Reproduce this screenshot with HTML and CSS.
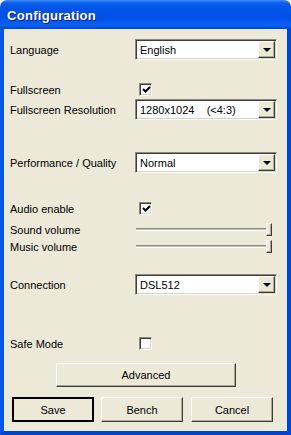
FILE: index.html
```html
<!DOCTYPE html>
<html lang="en">
<head>
    <meta charset="UTF-8">
    <meta name="viewport" content="width=device-width, initial-scale=1.0">
    <title>Configuration</title>
    <link rel="stylesheet" href="styles.css">
</head>
<body>
    <div class="window">
        <div class="titlebar">Configuration</div>

        <div class="client">
            <!-- Language -->
            <div class="row row-language">
                <span class="label">Language</span>
                <div class="combo"><span class="value">English</span><span class="arrow"></span></div>
            </div>

            <!-- Fullscreen -->
            <div class="row row-fullscreen">
                <span class="label">Fullscreen</span>
                <span class="check checked">
                    <svg width="9" height="9" viewBox="0 0 9 9"><path d="M1 4 L3.5 6.5 L8 2" fill="none" stroke="#000" stroke-width="2"/></svg>
                </span>
            </div>
            <div class="row row-resolution">
                <span class="label">Fullscreen Resolution</span>
                <div class="combo"><span class="value">1280x1024&nbsp;&nbsp;&nbsp;&nbsp;(&lt;4:3)</span><span class="arrow"></span></div>
            </div>

            <!-- Performance -->
            <div class="row row-quality">
                <span class="label">Performance / Quality</span>
                <div class="combo"><span class="value">Normal</span><span class="arrow"></span></div>
            </div>

            <!-- Audio -->
            <div class="row row-audio">
                <span class="label">Audio enable</span>
                <span class="check checked">
                    <svg width="9" height="9" viewBox="0 0 9 9"><path d="M1 4 L3.5 6.5 L8 2" fill="none" stroke="#000" stroke-width="2"/></svg>
                </span>
            </div>
            <div class="row row-slider">
                <span class="label">Sound volume</span>
                <div class="slider"><span class="thumb"></span></div>
            </div>
            <div class="row row-slider">
                <span class="label">Music volume</span>
                <div class="slider"><span class="thumb"></span></div>
            </div>

            <!-- Connection -->
            <div class="row row-connection">
                <span class="label">Connection</span>
                <div class="combo"><span class="value">DSL512</span><span class="arrow"></span></div>
            </div>

            <!-- Safe mode -->
            <div class="row row-safe">
                <span class="label">Safe Mode</span>
                <span class="check"></span>
            </div>

            <div class="advanced-row">
                <button class="btn btn-advanced">Advanced</button>
            </div>

            <div class="buttons">
                <button class="btn btn-default">Save</button>
                <button class="btn">Bench</button>
                <button class="btn">Cancel</button>
            </div>
        </div>
    </div>
</body>
</html>
```

FILE: styles.css
```css
body {
    margin: 0;
    background-color: #ffffff;
    font-family: "Liberation Sans", Arial, sans-serif;
    font-size: 11px;
    color: #000000;
}

.window {
    width: 291px;
    height: 435px;
}

.titlebar {
    height: 29px;
    box-sizing: border-box;
    padding: 0 0 0 7px;
    line-height: 31px;
    border-radius: 7px 7px 0 0;
    background: linear-gradient(to bottom, #3c8dff 0, #0a5eea 3px, #0054e6 8px, #0050e8 18px, #0a62f6 25px, #0046d8 29px);
    color: #ffffff;
    font-weight: bold;
    font-size: 13px;
    letter-spacing: 0.3px;
    text-shadow: 1px 1px 0 #0a1e78;
}

.client {
    height: 406px;
    box-sizing: border-box;
    background-color: #ece9d8;
    border: 4px solid #0054e3;
    border-top: none;
    border-left-color: #0555e6;
    border-right-color: #0046d6;
    border-bottom-color: #0044d0;
    padding: 10px 0 0 6px;
}

.row {
    display: flex;
    align-items: center;
}

.label {
    width: 125px;
    flex-shrink: 0;
}

.row-language { height: 21px; }
.row-fullscreen { height: 13px; margin-top: 23px; }
.row-resolution { height: 21px; margin-top: 3px; }
.row-quality { height: 21px; margin-top: 32px; }
.row-audio { height: 13px; margin-top: 29px; }
.row-slider { height: 14px; margin-top: 8px; }
.row-slider + .row-slider { margin-top: 3px; }
.row-connection { height: 21px; margin-top: 20px; }
.row-safe { height: 13px; margin-top: 42px; }

.combo {
    width: 142px;
    height: 21px;
    box-sizing: border-box;
    display: flex;
    align-items: center;
    background-color: #ffffff;
    border: 1px solid;
    border-color: #8c8a7f #ffffff #ffffff #8c8a7f;
    box-shadow: inset 1px 1px 0 #3f3d35, inset -1px -1px 0 #d7d3c2;
}

.combo .value {
    flex: 1;
    padding-left: 4px;
    white-space: nowrap;
}

.arrow {
    width: 17px;
    height: 17px;
    margin-right: 1px;
    box-sizing: border-box;
    background-color: #ece9d8;
    border: 1px solid;
    border-color: #ffffff #3f3d35 #3f3d35 #ffffff;
    box-shadow: inset -1px -1px 0 #aca899;
    display: flex;
    align-items: center;
    justify-content: center;
}

.arrow::after {
    content: "";
    border-left: 4px solid transparent;
    border-right: 4px solid transparent;
    border-top: 4px solid #000000;
    margin-top: 1px;
}

.check {
    width: 13px;
    height: 13px;
    margin-left: 4px;
    box-sizing: border-box;
    background-color: #ffffff;
    border: 1px solid;
    border-color: #8c8a7f #ffffff #ffffff #8c8a7f;
    box-shadow: inset 1px 1px 0 #3f3d35, inset -1px -1px 0 #d7d3c2;
    display: flex;
    align-items: center;
    justify-content: center;
}

.check svg {
    display: block;
    margin-left: 1px;
}

.slider {
    position: relative;
    width: 136px;
    height: 14px;
    margin-left: 1px;
}

.slider::before {
    content: "";
    position: absolute;
    left: 0;
    right: 2px;
    top: 5px;
    height: 3px;
    box-sizing: border-box;
    border-top: 1px solid #8c8a7f;
    border-bottom: 1px solid #ffffff;
    background-color: #c4c1b2;
}

.thumb {
    position: absolute;
    right: 0;
    top: 0;
    width: 6px;
    height: 13px;
    box-sizing: border-box;
    background-color: #ece9d8;
    border: 1px solid;
    border-color: #ffffff #3f3d35 #3f3d35 #ffffff;
    box-shadow: inset -1px -1px 0 #aca899;
}

.advanced-row {
    margin-top: 13px;
    padding-left: 46px;
}

.btn {
    display: block;
    width: 82px;
    height: 25px;
    box-sizing: border-box;
    padding: 0;
    font-family: "Liberation Sans", Arial, sans-serif;
    font-size: 11px;
    color: #000000;
    background-color: #ece9d8;
    border: 1px solid;
    border-color: #ffffff #3f3d35 #3f3d35 #ffffff;
    box-shadow: inset -1px -1px 0 #aca899;
}

.btn-advanced {
    width: 180px;
    height: 24px;
}

.btn-default {
    border: 2px solid #000000;
    box-shadow: none;
}

.buttons {
    display: flex;
    gap: 7px;
    margin-top: 10px;
    padding-left: 2px;
}

.buttons .btn + .btn + .btn {
    margin-left: 1px;
}
```
